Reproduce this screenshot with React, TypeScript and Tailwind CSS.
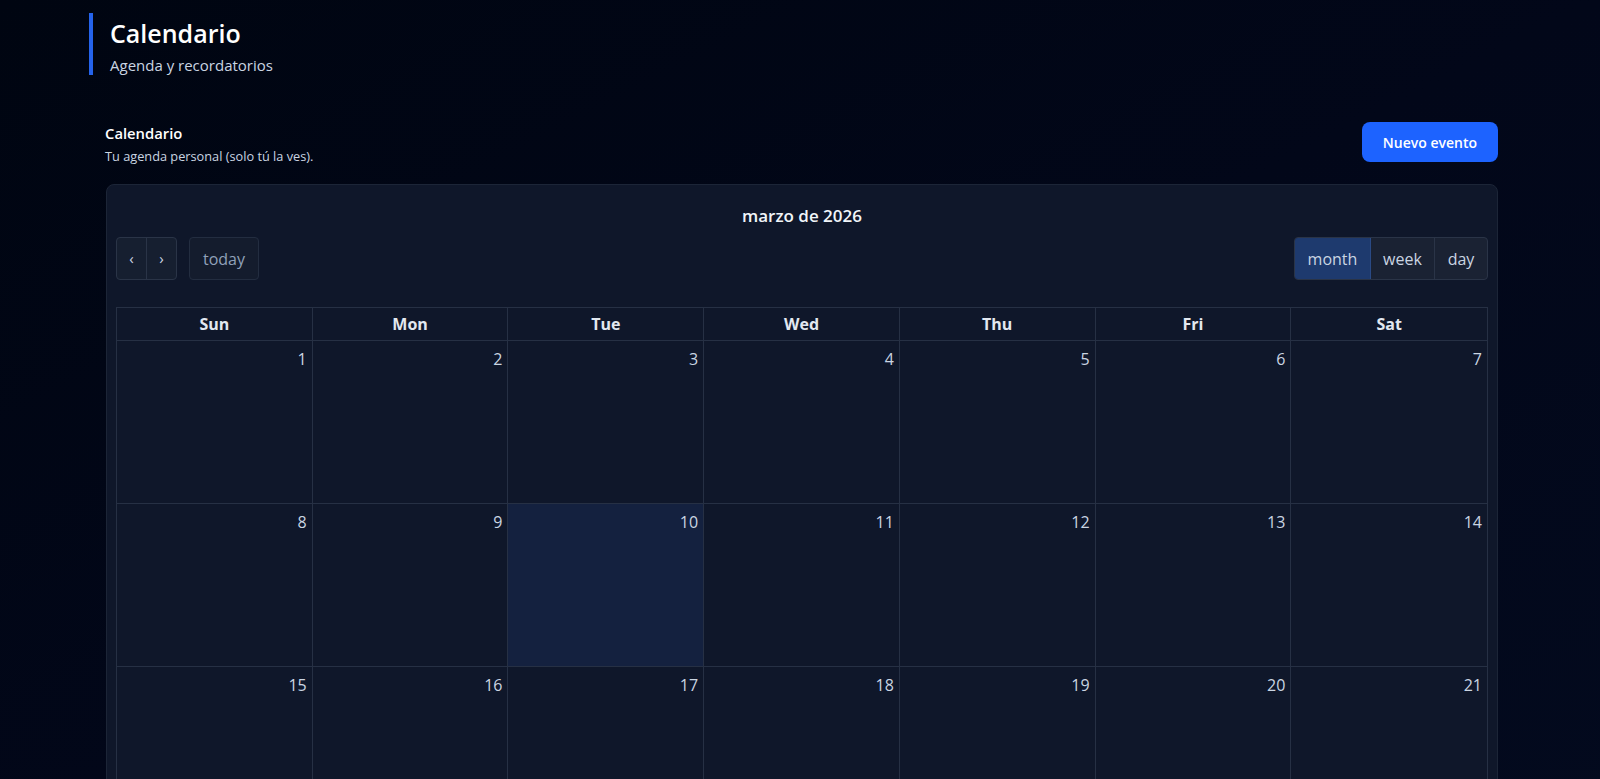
import React from "react";

const days = ["Sun", "Mon", "Tue", "Wed", "Thu", "Fri", "Sat"];
const weeks = [
  [1, 2, 3, 4, 5, 6, 7],
  [8, 9, 10, 11, 12, 13, 14],
  [15, 16, 17, 18, 19, 20, 21],
];

const App = () => {
  return (
    <div
      className="min-h-screen w-full bg-gradient-to-br from-[#000511] via-[#020719] to-[#030a1e] text-slate-100 overflow-hidden"
      style={{ fontFamily: '"Open Sans", "Noto Sans", sans-serif' }}
    >
      <div className="w-full pl-[89px] pr-[102px] pt-[13px]">
        {/* page header */}
        <header className="flex h-[62px] flex-col border-l-4 border-[#2563eb] pl-[17px] pt-[4px]">
          <h1 className="text-[25px] font-semibold leading-[32px] text-white">Calendario</h1>
          <p className="mt-[5px] text-[15px] leading-[22px] text-slate-300">Agenda y recordatorios</p>
        </header>

        <section className="mt-[47px] pl-[16px]">
          <div className="flex items-start justify-between">
            <div className="pt-[1px]">
              <h2 className="text-[14.8px] font-semibold leading-[20px] text-white">Calendario</h2>
              <p className="mt-[5px] text-[12.75px] leading-[16px] text-slate-300">Tu agenda personal (solo tú la ves).</p>
            </div>
            <button className="h-[40px] rounded-lg bg-[#1d63ff] px-[21px] text-[14px] font-semibold text-white">
              Nuevo evento
            </button>
          </div>

          {/* calendar card */}
          <div className="mt-[20px] ml-[1px] rounded-lg border border-[#1c2537] bg-[#0f172a] px-[9px] pt-[19px]">
            <div className="text-center text-[17px] font-semibold leading-[24px] text-slate-100">marzo de 2026</div>

            <div className="mt-[9px] flex items-center justify-between">
              <div className="flex items-center gap-[12px]">
                <div className="flex h-[43px] overflow-hidden rounded border border-[#2a3447] bg-[#161f30]">
                  <button className="w-[30px] border-r border-[#2a3447] text-[15px] text-slate-300">‹</button>
                  <button className="w-[29px] text-[15px] text-slate-300">›</button>
                </div>
                <button className="h-[43px] w-[70px] rounded border border-[#232d40] bg-[#141c2d] text-[16px] text-slate-400">
                  today
                </button>
              </div>
              <div className="flex h-[43px] overflow-hidden rounded border border-[#2a3447] bg-[#1a2233] text-[16px] text-slate-300">
                <button className="w-[76px] border-r border-[#2a4a85] bg-[#1e3a6e]">month</button>
                <button className="w-[64px] border-r border-[#2a3447]">week</button>
                <button className="w-[52px]">day</button>
              </div>
            </div>

            <div className="mt-[27px] border border-[#263044]">
              <div className="grid grid-cols-7">
                {days.map((d, i) => (
                  <div
                    key={d}
                    className={`h-[33px] border-b border-[#263044] text-center text-[16px] font-bold leading-[32px] text-slate-200 ${i < 6 ? "border-r" : ""}`}
                  >
                    {d}
                  </div>
                ))}
              </div>
              {weeks.map((w, wi) => (
                <div key={wi} className="grid grid-cols-7">
                  {w.map((n, i) => (
                    <div
                      key={n}
                      className={`h-[163px] border-b border-[#263044] pr-[5px] pt-[6px] text-right text-[16px] leading-[24px] text-slate-300 ${i < 6 ? "border-r" : ""} ${n === 10 ? "bg-[#14213f]" : ""}`}
                    >
                      {n}
                    </div>
                  ))}
                </div>
              ))}
            </div>
          </div>
        </section>
      </div>
    </div>
  );
};

export default App;
